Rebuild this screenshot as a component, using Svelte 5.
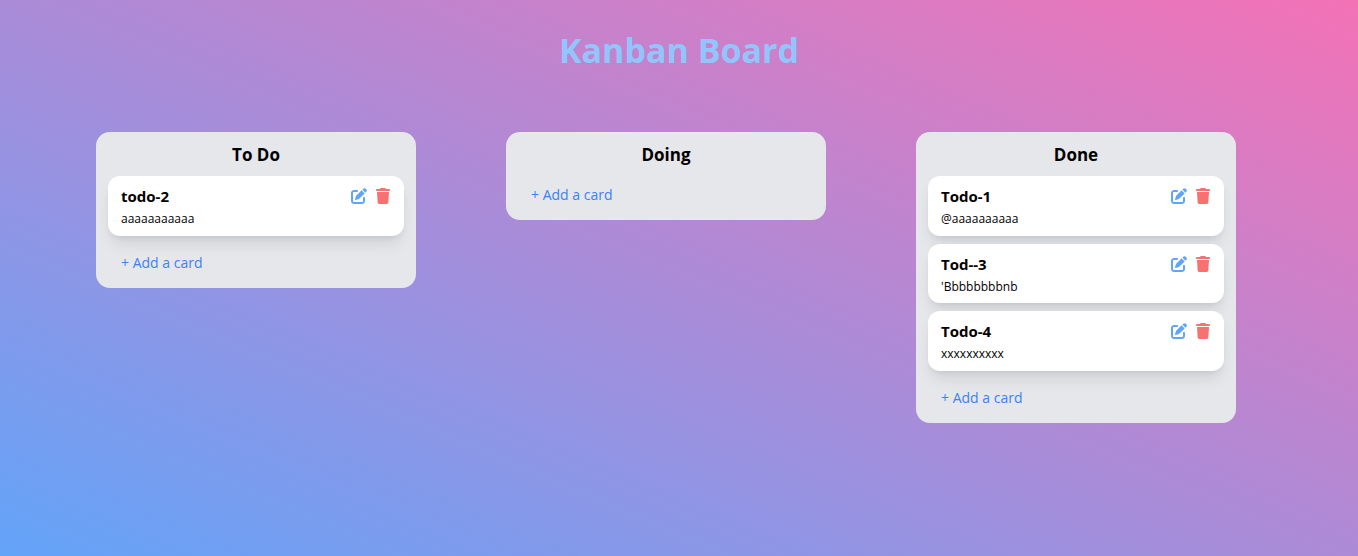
<script>
  let columns = $state([
    { name: 'To Do', cards: [{ title: 'todo-2', text: 'aaaaaaaaaaa' }] },
    { name: 'Doing', cards: [] },
    {
      name: 'Done',
      cards: [
        { title: 'Todo-1', text: '@aaaaaaaaaa' },
        { title: 'Tod--3', text: "'Bbbbbbbbnb" },
        { title: 'Todo-4', text: 'xxxxxxxxxx' }
      ]
    }
  ]);
</script>

<main>
  <h1>Kanban Board</h1>
  <div class="board">
    {#each columns as column}
      <section class="column">
        <h2>{column.name}</h2>
        {#each column.cards as card, i}
          <article class="card">
            <header>
              <h3>{card.title}</h3>
              <div class="actions">
                <button class="edit" aria-label="Edit card">
                  <svg viewBox="0 0 512 512" width="16" height="16" fill="currentColor" aria-hidden="true">
                    <path d="M471.6 21.7c-21.9-21.9-57.3-21.9-79.2 0L362.3 51.7l97.9 97.9 30.1-30.1c21.9-21.9 21.9-57.3 0-79.2L471.6 21.7zm-299.2 220c-6.1 6.1-10.8 13.6-13.5 21.9l-29.6 88.8c-2.9 8.6-.6 18.1 5.8 24.6s15.9 8.7 24.6 5.8l88.8-29.6c8.2-2.7 15.7-7.4 21.9-13.5L437.7 172.3 339.7 74.3 172.4 241.7zM96 64C43 64 0 107 0 160V416c0 53 43 96 96 96H352c53 0 96-43 96-96V320c0-17.7-14.3-32-32-32s-32 14.3-32 32v96c0 17.7-14.3 32-32 32H96c-17.7 0-32-14.3-32-32V160c0-17.7 14.3-32 32-32h96c17.7 0 32-14.3 32-32s-14.3-32-32-32H96z" />
                  </svg>
                </button>
                <button class="delete" aria-label="Delete card" onclick={() => column.cards.splice(i, 1)}>
                  <svg viewBox="0 0 448 512" width="14" height="16" fill="currentColor" aria-hidden="true">
                    <path d="M135.2 17.7L128 32H32C14.3 32 0 46.3 0 64S14.3 96 32 96H416c17.7 0 32-14.3 32-32s-14.3-32-32-32H320l-7.2-14.3C307.4 6.8 296.3 0 284.2 0H163.8c-12.1 0-23.2 6.8-28.6 17.7zM416 128H32L53.2 467c1.6 25.3 22.6 45 47.9 45H346.9c25.3 0 46.3-19.7 47.9-45L416 128z" />
                  </svg>
                </button>
              </div>
            </header>
            <p>{card.text}</p>
          </article>
        {/each}
        <button class="add">+ Add a card</button>
      </section>
    {/each}
  </div>
</main>

<style>
  :global(body) {
    margin: 0;
  }
  main {
    box-sizing: border-box;
    min-height: 100vh;
    padding: 30px 32px 32px 96px;
    background: linear-gradient(to top right, #60a5fa, #f472b6) top / 100% 104% no-repeat;
    font-family: 'Segoe UI', 'Open Sans', 'Noto Sans', sans-serif;
    color: #000;
  }
  h1,
  h2,
  h3,
  p {
    margin: 0;
  }
  h1 {
    margin: 0 0 62px -64px;
    font-size: 34px;
    line-height: 40px;
    font-weight: 700;
    text-align: center;
    color: #93c5fd;
  }
  .board {
    display: grid;
    grid-template-columns: repeat(3, 1fr);
    align-items: start;
  }
  .column {
    box-sizing: border-box;
    width: 320px;
    max-width: 100%;
    padding: 8px 12px;
    border-radius: 14px;
    background: #e5e7eb;
  }
  h2 {
    margin-bottom: 6px;
    font-size: 17px;
    line-height: 30px;
    font-weight: 700;
    text-align: center;
  }
  .card {
    margin-bottom: 8px;
    padding: 8px 14px 7px 13px;
    border-radius: 12px;
    background: #fff;
    box-shadow:
      0 10px 15px -3px rgb(0 0 0 / 0.1),
      0 4px 6px -4px rgb(0 0 0 / 0.1);
  }
  header {
    display: flex;
    justify-content: space-between;
    align-items: center;
    margin-bottom: 1px;
  }
  h3 {
    font-size: 15px;
    line-height: 24px;
    font-weight: 700;
  }
  p {
    font-size: 12px;
    line-height: 1.625;
  }
  .actions {
    display: flex;
    gap: 9px;
  }
  button {
    padding: 0;
    border: 0;
    background: none;
    font: inherit;
    cursor: pointer;
  }
  .actions svg {
    display: block;
  }
  .edit {
    color: #60a5fa;
  }
  .delete {
    color: #f87171;
  }
  .add {
    display: block;
    padding: 8px 13px 6px;
    font-size: 14px;
    line-height: 22px;
    color: #3b82f6;
  }
</style>
